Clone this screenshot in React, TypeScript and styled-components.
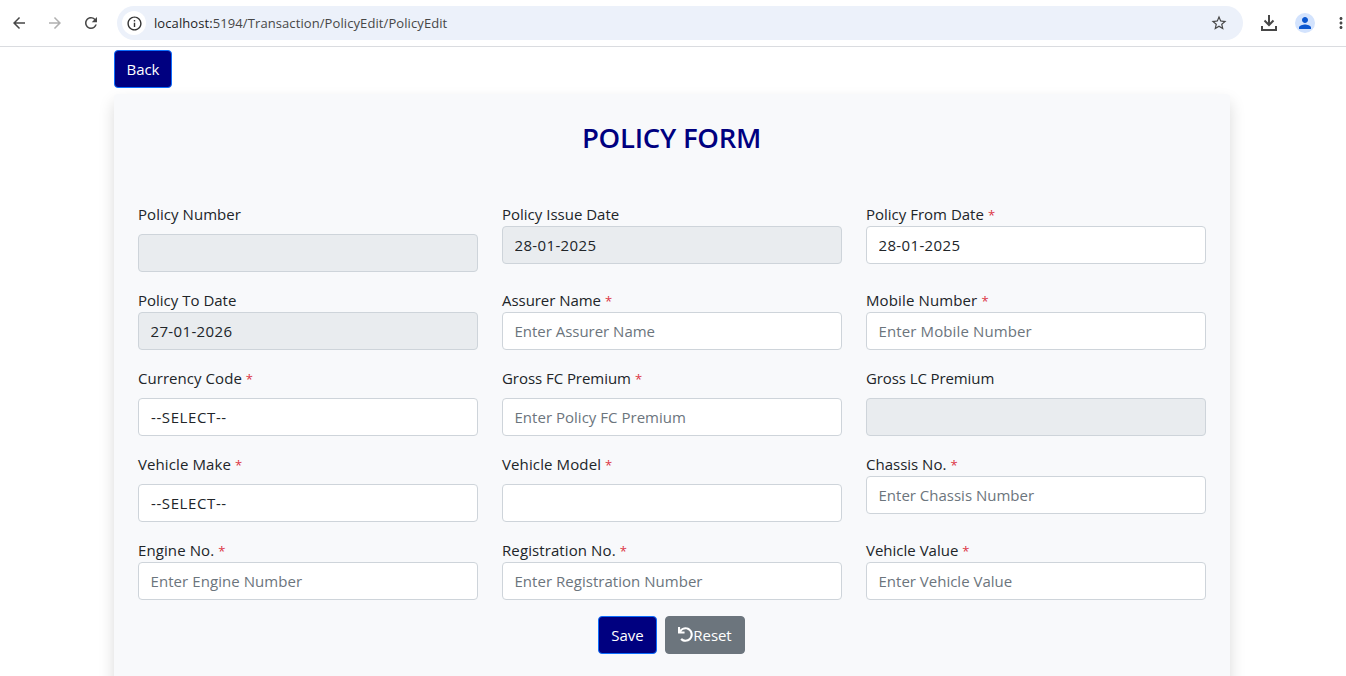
import React from "react";
import styled, { createGlobalStyle } from "styled-components";
import { MdArrowBack, MdArrowForward, MdRefresh, MdInfoOutline, MdStarBorder, MdMoreVert, MdPerson } from "react-icons/md";
import { FaUndo } from "react-icons/fa";

const GlobalStyle = createGlobalStyle`
  * { box-sizing: border-box; }
  html, body { margin: 0; background: #fff; overflow: hidden; }
  body, input, select, button { font-family: "Open Sans", "Noto Sans", sans-serif; }
`;

const Screen = styled.div`
  height: 676px;
  overflow: hidden;
  color: #212529;
`;

const BrowserBar = styled.header`
  height: 47px;
  display: flex;
  align-items: center;
  padding-left: 10px;
  border-bottom: 1px solid #dadce0;
  background: #fff;
  color: #474747;
`;

const BarIcon = styled.span<{ $gap?: number; $dim?: boolean }>`
  display: flex;
  flex: none;
  align-items: center;
  justify-content: center;
  width: 18px;
  height: 18px;
  margin-right: ${(p) => p.$gap ?? 0}px;
  color: ${(p) => (p.$dim ? "#b0b0b0" : "#474747")};
`;

const AddressBar = styled.div`
  width: 1126px;
  height: 34px;
  flex: none;
  display: flex;
  align-items: center;
  margin-right: 17px;
  padding: 0 15px 0 5px;
  border-radius: 17px;
  background: #ecf1fa;
`;

const SiteInfo = styled.span`
  display: flex;
  align-items: center;
  justify-content: center;
  width: 24px;
  height: 24px;
  border-radius: 50%;
  background: #fff;
  color: #333;
`;

const Url = styled.span`
  flex: 1;
  margin-left: 8px;
  font-size: 13px;
  letter-spacing: 0.09px;
  white-space: nowrap;
  color: #474747;
`;

const Host = styled.span`
  color: #1f1f1f;
`;

const DownloadIcon = styled.svg`
  flex: none;
  width: 18px;
  height: 18px;
  fill: none;
  stroke: #474747;
  stroke-width: 2;
`;

const Avatar = styled.span`
  display: flex;
  flex: none;
  align-items: center;
  justify-content: center;
  width: 20px;
  height: 20px;
  margin: 0 17px 0 17px;
  border-radius: 50%;
  background: #d3e3fd;
  color: #0b57d0;
`;

const Page = styled.main`
  width: 1116px;
  margin-left: 114px;
  padding-top: 3px;
`;

const Button = styled.button<{ $tone?: "navy" | "gray"; $width: number }>`
  display: inline-flex;
  align-items: center;
  justify-content: center;
  width: ${(p) => p.$width}px;
  height: 38px;
  padding: 0 0 1px;
  border: 1px solid ${(p) => (p.$tone === "gray" ? "#6c757d" : "#0d6efd")};
  border-radius: 4px;
  background: ${(p) => (p.$tone === "gray" ? "#6c757d" : "#000080")};
  color: #fff;
  font-size: 15px;
  letter-spacing: -0.05px;
`;

const Card = styled.section`
  height: 640px;
  margin-top: 6px;
  padding: 24px;
  border-radius: 4px;
  background: #f8f9fb;
  box-shadow: 0 8px 16px rgba(0, 0, 0, 0.15);
`;

const Title = styled.h3`
  margin: 0 0 48px;
  padding: 2px 1px 0 0;
  height: 36px;
  line-height: 36px;
  text-align: center;
  font-size: 27.5px;
  font-weight: 600;
  letter-spacing: -0.25px;
  color: #000080;
`;

const Grid = styled.form`
  display: grid;
  grid-template-columns: repeat(3, 340px);
  column-gap: 24px;
  row-gap: 16px;
`;

const Field = styled.div`
  display: flex;
  flex-direction: column;
`;

const Label = styled.label<{ $spaced?: boolean; $ls: number }>`
  height: 24px;
  line-height: 24px;
  margin-bottom: ${(p) => (p.$spaced ? 8 : 0)}px;
  font-size: 15px;
  letter-spacing: ${(p) => p.$ls}px;
  white-space: pre;
`;

const Required = styled.span`
  margin-left: 4px;
  font-size: 13px;
  color: #dc3545;
`;

const Input = styled.input<{ $ls: number }>`
  width: 100%;
  height: 38px;
  padding: 6px 11.5px;
  border: 1px solid #ced4da;
  border-radius: 4px;
  outline: none;
  background: #fff;
  color: #212529;
  font-size: 15px;
  letter-spacing: ${(p) => p.$ls}px;
  &:disabled { background: #e9ecef; }
  &::placeholder { color: #6c757d; opacity: 1; }
`;

const Select = styled.select`
  appearance: none;
  width: 100%;
  height: 38px;
  padding: 6px 12px;
  border: 1px solid #ced4da;
  border-radius: 4px;
  background: #fff;
  color: #212529;
  font-size: 15px;
  letter-spacing: 0.6px;
`;

const Actions = styled.div`
  display: flex;
  justify-content: center;
  gap: 8px;
  margin-top: 16px;
  padding-right: 1px;
`;

type FieldSpec = {
  label: string;
  required?: boolean;
  spaced?: boolean;
  disabled?: boolean;
  value?: string;
  placeholder?: string;
  select?: boolean;
  ls?: number;
  inputLs?: number;
};

const fields: FieldSpec[] = [
  { label: "Policy Number", spaced: true, disabled: true, ls: 0.05 },
  { label: "Policy Issue Date", disabled: true, value: "28-01-2025", inputLs: 0.36 },
  { label: "Policy From Date", required: true, value: "28-01-2025", inputLs: 0.36 },
  { label: "Policy To Date", disabled: true, value: "27-01-2026", inputLs: 0.36 },
  { label: "Assurer Name", required: true, placeholder: "Enter Assurer Name", ls: -0.05, inputLs: -0.02 },
  { label: "Mobile Number", required: true, placeholder: "Enter Mobile Number", ls: 0.13, inputLs: 0.12 },
  { label: "Currency Code", required: true, spaced: true, select: true, ls: 0.05 },
  { label: "Gross FC Premium", required: true, spaced: true, placeholder: "Enter Policy FC Premium", ls: -0.05, inputLs: 0.02 },
  { label: "Gross LC Premium", spaced: true, disabled: true, ls: -0.1 },
  { label: "Vehicle Make", required: true, spaced: true, select: true, ls: 0.1 },
  { label: "Vehicle Model", required: true, spaced: true, ls: 0.12 },
  { label: "Chassis No.", required: true, placeholder: "Enter Chassis Number" },
  { label: "Engine No.", required: true, placeholder: "Enter Engine Number", ls: 0.1, inputLs: 0.07 },
  { label: "Registration No.", required: true, placeholder: "Enter Registration Number", ls: 0.1, inputLs: 0.03 },
  { label: "Vehicle Value", required: true, placeholder: "Enter Vehicle Value" },
];

export default function App() {
  return (
    <Screen>
      <GlobalStyle />
      <BrowserBar>
        <BarIcon $gap={18}><MdArrowBack size={18} /></BarIcon>
        <BarIcon $gap={18} $dim><MdArrowForward size={18} /></BarIcon>
        <BarIcon $gap={17}><MdRefresh size={18} /></BarIcon>
        <AddressBar>
          <SiteInfo><MdInfoOutline size={17} /></SiteInfo>
          <Url><Host>localhost:</Host>5194/Transaction/PolicyEdit/PolicyEdit</Url>
          <BarIcon><MdStarBorder size={18} /></BarIcon>
        </AddressBar>
        <DownloadIcon viewBox="0 0 18 18">
          <path d="M9 1v9M4.500 6.500L9 11l4.500-4.500M2 12v4h14v-4" />
        </DownloadIcon>
        <Avatar><MdPerson size={18} /></Avatar>
        <BarIcon><MdMoreVert size={20} /></BarIcon>
      </BrowserBar>
      <Page>
        <Button $width={58}>Back</Button>
        <Card>
          <Title>POLICY FORM</Title>
          <Grid>
            {fields.map((f) => (
              <Field key={f.label}>
                <Label $spaced={f.spaced} $ls={f.ls ?? 0}>
                  {f.label}
                  {f.required && <Required>*</Required>}
                </Label>
                {f.select ? (
                  <Select><option>--SELECT--</option></Select>
                ) : (
                  <Input $ls={f.inputLs ?? 0} disabled={f.disabled} defaultValue={f.value} placeholder={f.placeholder} />
                )}
              </Field>
            ))}
          </Grid>
          <Actions>
            <Button $width={59}>Save</Button>
            <Button $width={80} $tone="gray"><FaUndo size={15} />Reset</Button>
          </Actions>
        </Card>
      </Page>
    </Screen>
  );
}
